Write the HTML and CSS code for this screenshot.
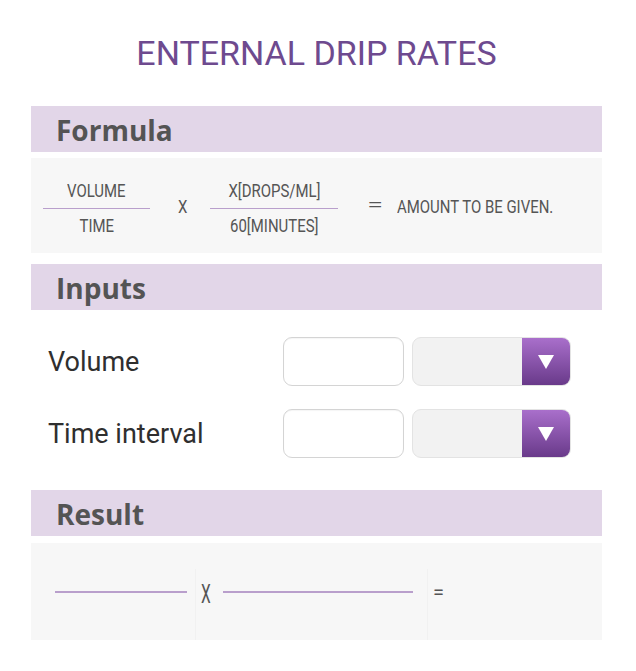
FILE: index.html
```html
<!DOCTYPE html>
<html>
<head>
<meta charset="utf-8">
<link rel="stylesheet" href="styles.css">
</head>
<body>
<div class="page">
  <h1 class="title">ENTERNAL DRIP RATES</h1>

  <div class="bar"><span>Formula</span></div>
  <div class="panel formula">
    <div class="frac frac1">
      <span class="c">VOLUME</span>
      <span class="rule"></span>
      <span class="c">TIME</span>
    </div>
    <span class="c op times">X</span>
    <div class="frac frac2">
      <span class="c">X[DROPS/ML]</span>
      <span class="rule"></span>
      <span class="c">60[MINUTES]</span>
    </div>
    <span class="c op eq">=</span>
    <span class="c amount">AMOUNT TO BE GIVEN.</span>
  </div>

  <div class="bar bar-inputs"><span>Inputs</span></div>
  <div class="inputs">
    <div class="row">
      <label class="lbl">Volume</label>
      <div class="box"></div>
      <div class="select"><div class="arrow"><span class="tri"></span></div></div>
    </div>
    <div class="row">
      <label class="lbl">Time interval</label>
      <div class="box"></div>
      <div class="select"><div class="arrow"><span class="tri"></span></div></div>
    </div>
  </div>

  <div class="bar"><span>Result</span></div>
  <div class="panel result">
    <div class="cell cell1"><span class="rline l1"></span></div>
    <div class="cell cell2"><span class="c rx">X</span><span class="rline l2"></span></div>
    <div class="cell cell3"><span class="req">=</span></div>
  </div>
</div>
</body>
</html>
```
FILE: styles.css
```css
* { box-sizing: border-box; }
html, body { margin: 0; padding: 0; background: #ffffff; }
body { font-family: Roboto, "Liberation Sans", sans-serif; }
.page { margin: 0 34px 0 31px; padding-top: 35px; }

.title {
  margin: 0 0 35px;
  text-align: center;
  font-family: Roboto, sans-serif;
  font-weight: 400;
  font-size: 34px;
  line-height: 36px;
  color: #6e4a8f;
}

.bar {
  height: 46px;
  background: #e2d6e8;
  display: flex;
  align-items: center;
  padding-left: 25px;
}
.bar span {
  font-family: "Open Sans", sans-serif;
  font-weight: 700;
  font-size: 28px;
  color: #545454;
  line-height: 1;
  margin-top: 1px;
}

.panel { background: #f7f7f7; }

.c {
  display: inline-block;
  font-family: Roboto, sans-serif;
  color: #555;
  transform: scaleX(0.83);
}

.formula {
  margin-top: 6px;
  height: 95px;
  display: flex;
  align-items: center;
  padding-left: 12px;
}
.frac {
  display: flex;
  flex-direction: column;
  align-items: center;
  margin-top: 6px;
}
.frac .c { font-size: 18px; line-height: 22px; }
.frac .rule {
  align-self: stretch;
  height: 1px;
  background: #b99fcc;
  margin: 6px 0 6px;
}
.frac1 { width: 107px; }
.frac2 { width: 128px; }
.op { font-size: 18px; }
.times { margin: 2px 22px 0 27px; }
.eq { margin: -2px 16px 0 31px; font-size: 22px; font-weight: 300; transform: scaleX(1.3); }
.amount { font-size: 18px; transform-origin: left center; white-space: nowrap; margin-top: 2px; }

.bar-inputs { margin-top: 11px; }

.inputs {
  padding: 27px 0 32px 17px;
  display: flex;
  flex-direction: column;
  gap: 23px;
}
.row { display: flex; align-items: center; height: 49px; }
.lbl {
  width: 235px;
  font-family: Roboto, sans-serif;
  font-size: 27px;
  color: #2f2f2f;
}
.box {
  width: 121px;
  height: 49px;
  border: 1.5px solid #d4d4d4;
  border-radius: 9px;
  background: #fff;
  box-shadow: inset 0 1px 1px rgba(0,0,0,0.04);
}
.select {
  margin-left: 8px;
  width: 159px;
  height: 49px;
  border: 1.5px solid #e3e3e3;
  border-radius: 9px;
  background: #f2f2f2;
  display: flex;
  justify-content: flex-end;
  overflow: hidden;
}
.arrow {
  width: 48px;
  height: 100%;
  background: linear-gradient(#a96fcb, #693a8a);
  display: flex;
  align-items: center;
  justify-content: center;
}
.tri {
  width: 0; height: 0;
  border-left: 8px solid transparent;
  border-right: 8px solid transparent;
  border-top: 14px solid #fff;
}

.result {
  margin-top: 7px;
  height: 97px;
  display: flex;
  align-items: stretch;
}
.cell { display: flex; align-items: center; }
.cell1 { width: 164px; padding-left: 24px; }
.cell2 { width: 233px; border-left: 1px solid #f1f1f1; border-right: 1px solid #f1f1f1; margin-top: 26px; padding-bottom: 26px; }
.cell3 { padding-left: 5px; }
.rline { height: 2px; background: #b99fcc; display: block; }
.l1 { width: 132px; }
.l2 { width: 190px; margin-left: 9px; }
.rx { font-size: 25px; margin-left: 2px; line-height: 1; transform: scaleX(0.62); margin-top: 6px; }
.req { font-family: Roboto, sans-serif; font-size: 20px; color: #555; margin-top: 0; }
```
